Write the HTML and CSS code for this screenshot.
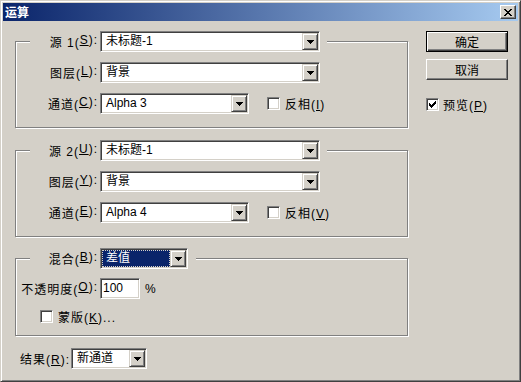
FILE: index.html
```html
<!DOCTYPE html>
<html lang="zh-CN">
<head>
    <meta charset="UTF-8">
    <meta name="viewport" content="width=device-width, initial-scale=1.0">
    <title>运算</title>
    <link rel="stylesheet" href="styles.css">
</head>
<body>
    <div class="window">
        <div class="titlebar">
            <span class="title">运算</span>
            <span class="close">
                <svg width="8" height="7" viewBox="0 0 8 7" shape-rendering="crispEdges"><path d="M0 0h2v1h-2z M6 0h2v1h-2z M1 1h2v1h-2z M5 1h2v1h-2z M2 2h4v1h-4z M3 3h2v1h-2z M2 4h4v1h-4z M1 5h2v1h-2z M5 5h2v1h-2z M0 6h2v1h-2z M6 6h2v1h-2z" fill="#000"/></svg>
            </span>
        </div>
        <div class="dialog">
            <div class="main">
                <fieldset class="group">
                    <legend class="head">
                        <span class="lbl">源 1(<u>S</u>):</span>
                        <span class="combo w220"><span class="value">未标题-1</span><span class="arrow"><svg width="7" height="4" viewBox="0 0 7 4" shape-rendering="crispEdges"><path d="M0 0h7v1h-1v1h-1v1h-1v1h-1v-1h-1v-1h-1v-1h-1z"/></svg></span></span>
                    </legend>
                    <div class="row">
                        <span class="lbl">图层(<u>L</u>):</span>
                        <span class="combo w220"><span class="value">背景</span><span class="arrow"><svg width="7" height="4" viewBox="0 0 7 4" shape-rendering="crispEdges"><path d="M0 0h7v1h-1v1h-1v1h-1v1h-1v-1h-1v-1h-1v-1h-1z"/></svg></span></span>
                    </div>
                    <div class="row">
                        <span class="lbl">通道(<u>C</u>):</span>
                        <span class="combo w149"><span class="value">Alpha 3</span><span class="arrow"><svg width="7" height="4" viewBox="0 0 7 4" shape-rendering="crispEdges"><path d="M0 0h7v1h-1v1h-1v1h-1v1h-1v-1h-1v-1h-1v-1h-1z"/></svg></span></span>
                        <span class="check invert"></span>
                        <span class="check-label">反相(<u>I</u>)</span>
                    </div>
                </fieldset>

                <fieldset class="group">
                    <legend class="head">
                        <span class="lbl">源 2(<u>U</u>):</span>
                        <span class="combo w220"><span class="value">未标题-1</span><span class="arrow"><svg width="7" height="4" viewBox="0 0 7 4" shape-rendering="crispEdges"><path d="M0 0h7v1h-1v1h-1v1h-1v1h-1v-1h-1v-1h-1v-1h-1z"/></svg></span></span>
                    </legend>
                    <div class="row">
                        <span class="lbl">图层(<u>Y</u>):</span>
                        <span class="combo w220"><span class="value">背景</span><span class="arrow"><svg width="7" height="4" viewBox="0 0 7 4" shape-rendering="crispEdges"><path d="M0 0h7v1h-1v1h-1v1h-1v1h-1v-1h-1v-1h-1v-1h-1z"/></svg></span></span>
                    </div>
                    <div class="row">
                        <span class="lbl">通道(<u>E</u>):</span>
                        <span class="combo w149"><span class="value">Alpha 4</span><span class="arrow"><svg width="7" height="4" viewBox="0 0 7 4" shape-rendering="crispEdges"><path d="M0 0h7v1h-1v1h-1v1h-1v1h-1v-1h-1v-1h-1v-1h-1z"/></svg></span></span>
                        <span class="check invert"></span>
                        <span class="check-label">反相(<u>V</u>)</span>
                    </div>
                </fieldset>

                <fieldset class="group blend">
                    <legend class="head">
                        <span class="lbl">混合(<u>B</u>):</span>
                        <span class="combo w88"><span class="value focused">差值</span><span class="arrow"><svg width="7" height="4" viewBox="0 0 7 4" shape-rendering="crispEdges"><path d="M0 0h7v1h-1v1h-1v1h-1v1h-1v-1h-1v-1h-1v-1h-1z"/></svg></span></span>
                    </legend>
                    <div class="row">
                        <span class="lbl">不透明度(<u>O</u>):</span>
                        <span class="field">100</span>
                        <span class="unit">%</span>
                    </div>
                    <div class="row small">
                        <span class="check mask"></span>
                        <span class="check-label">蒙版(<u>K</u>)...</span>
                    </div>
                </fieldset>

                <div class="row result">
                    <span class="result-lbl">结果(<u>R</u>):</span>
                    <span class="combo w76"><span class="value">新通道</span><span class="arrow"><svg width="7" height="4" viewBox="0 0 7 4" shape-rendering="crispEdges"><path d="M0 0h7v1h-1v1h-1v1h-1v1h-1v-1h-1v-1h-1v-1h-1z"/></svg></span></span>
                </div>
            </div>

            <div class="side">
                <button class="btn default">确定</button>
                <button class="btn">取消</button>
                <div class="preview">
                    <span class="check">
                        <svg width="7" height="7" viewBox="0 0 7 7" shape-rendering="crispEdges"><path d="M0 2h1v3h-1z M1 3h1v3h-1z M2 4h1v3h-1z M3 3h1v3h-1z M4 2h1v3h-1z M5 1h1v3h-1z M6 0h1v3h-1z"/></svg>
                    </span>
                    <span class="check-label">预览(<u>P</u>)</span>
                </div>
            </div>
        </div>
    </div>
</body>
</html>
```
FILE: styles.css
```css
body {
    margin: 0;
    padding: 0;
    font-family: "Liberation Sans", "Noto Sans CJK SC", sans-serif;
    font-size: 12px;
    color: #000;
    background-color: #D4D0C8;
}

/* Ventana estilo Windows clásico */
.window {
    width: 521px;
    height: 382px;
    box-sizing: border-box;
    border: 1px solid;
    border-color: #D4D0C8 #404040 #404040 #D4D0C8;
    box-shadow: inset 1px 1px 0 #fff, inset -1px -1px 0 #808080;
    padding: 2px;
    background-color: #D4D0C8;
}

.titlebar {
    display: flex;
    align-items: center;
    height: 18px;
    padding: 0 2px 0 2px;
    background: linear-gradient(to right, #0A246A, #A6CAF0);
}

.titlebar .title {
    color: white;
    font-family: "Noto Sans CJK SC", sans-serif;
    font-weight: bold;
    font-size: 12px;
    line-height: 18px;
}

.titlebar .close {
    margin-left: auto;
    width: 16px;
    height: 14px;
    box-sizing: border-box;
    border: 1px solid;
    border-color: #fff #404040 #404040 #fff;
    box-shadow: inset -1px -1px 0 #808080;
    background-color: #D4D0C8;
    display: flex;
    align-items: center;
    justify-content: center;
}

.dialog {
    display: flex;
    gap: 18px;
    padding: 10px 0 0 12px;
}

.main {
    width: 393px;
}

/* Marcos de grupo */
.group {
    margin: 0 0 12px 0;
    padding: 10px 0 13px 14px;
    border: 1px solid #808080;
    box-shadow: inset 1px 1px 0 #fff, 1px 1px 0 #fff;
    min-width: 0;
}

.group.blend {
    margin-top: -1px;
    padding-top: 9px;
    padding-bottom: 12px;
}

.group .head {
    display: flex;
    align-items: center;
    height: 21px;
    margin: 0;
    padding: 0 7px 0 0;
    background-color: #D4D0C8;
}

.group.blend .head {
    padding-right: 8px;
}

.row {
    display: flex;
    align-items: center;
    height: 21px;
}

.row + .row {
    margin-top: 10px;
}

.row.small {
    height: 14px;
}

.lbl {
    display: flex;
    justify-content: flex-end;
    width: 68px;
    margin-right: 2px;
    white-space: nowrap;
    letter-spacing: 1px;
}

/* Listas desplegables */
.combo {
    display: flex;
    height: 21px;
    box-sizing: border-box;
    border: 1px solid;
    border-color: #808080 #fff #fff #808080;
    box-shadow: inset 1px 1px 0 #404040, inset -1px -1px 0 #D4D0C8;
    padding: 1px;
    background-color: white;
}

.w220 { width: 220px; }
.w149 { width: 149px; }
.w88 { width: 88px; }
.w76 { width: 76px; }

.combo .value {
    flex: 1;
    padding-left: 4px;
    line-height: 17px;
    white-space: nowrap;
    overflow: hidden;
}

.combo .value.focused {
    background-color: #0A246A;
    color: white;
    outline: 1px dotted #D4D0C8;
    outline-offset: -1px;
}

.combo .arrow {
    width: 16px;
    height: 17px;
    box-sizing: border-box;
    border: 1px solid;
    border-color: #D4D0C8 #404040 #404040 #D4D0C8;
    box-shadow: inset 1px 1px 0 #fff, inset -1px -1px 0 #808080;
    background-color: #D4D0C8;
    display: flex;
    align-items: center;
    justify-content: center;
}

.combo .arrow svg {
    margin-left: 1px;
}

.field {
    width: 40px;
    height: 21px;
    box-sizing: border-box;
    border: 1px solid;
    border-color: #808080 #fff #fff #808080;
    box-shadow: inset 1px 1px 0 #404040, inset -1px -1px 0 #D4D0C8;
    padding-left: 2px;
    line-height: 19px;
    background-color: white;
}

.unit {
    margin-left: 5px;
}

/* Casillas */
.check {
    width: 13px;
    height: 13px;
    box-sizing: border-box;
    border: 1px solid;
    border-color: #808080 #fff #fff #808080;
    box-shadow: inset 1px 1px 0 #404040, inset -1px -1px 0 #D4D0C8;
    background-color: white;
    display: flex;
    align-items: center;
    justify-content: center;
    flex-shrink: 0;
}

.check.invert {
    margin-left: 18px;
}

.check.mask {
    margin-left: 10px;
}

.check-label {
    margin-left: 5px;
    white-space: nowrap;
    letter-spacing: 1px;
}

.result {
    padding-left: 5px;
}

.result-lbl {
    margin-right: 1px;
    letter-spacing: 1px;
}

/* Botones */
.side {
    display: flex;
    flex-direction: column;
    width: 82px;
}

.btn {
    width: 82px;
    height: 21px;
    box-sizing: border-box;
    border: 1px solid;
    border-color: #fff #404040 #404040 #fff;
    box-shadow: inset -1px -1px 0 #808080;
    background-color: #D4D0C8;
    font-family: "Liberation Sans", "Noto Sans CJK SC", sans-serif;
    font-size: 12px;
    color: #000;
    padding: 0;
}

.btn.default {
    border-color: #000;
    box-shadow: inset 1px 1px 0 #fff, inset -1px -1px 0 #404040, inset -2px -2px 0 #808080;
}

.btn + .btn {
    margin-top: 7px;
}

.preview {
    display: flex;
    align-items: center;
    margin-top: 18px;
    height: 13px;
}

.preview .check-label {
    margin-left: 4px;
}
```
